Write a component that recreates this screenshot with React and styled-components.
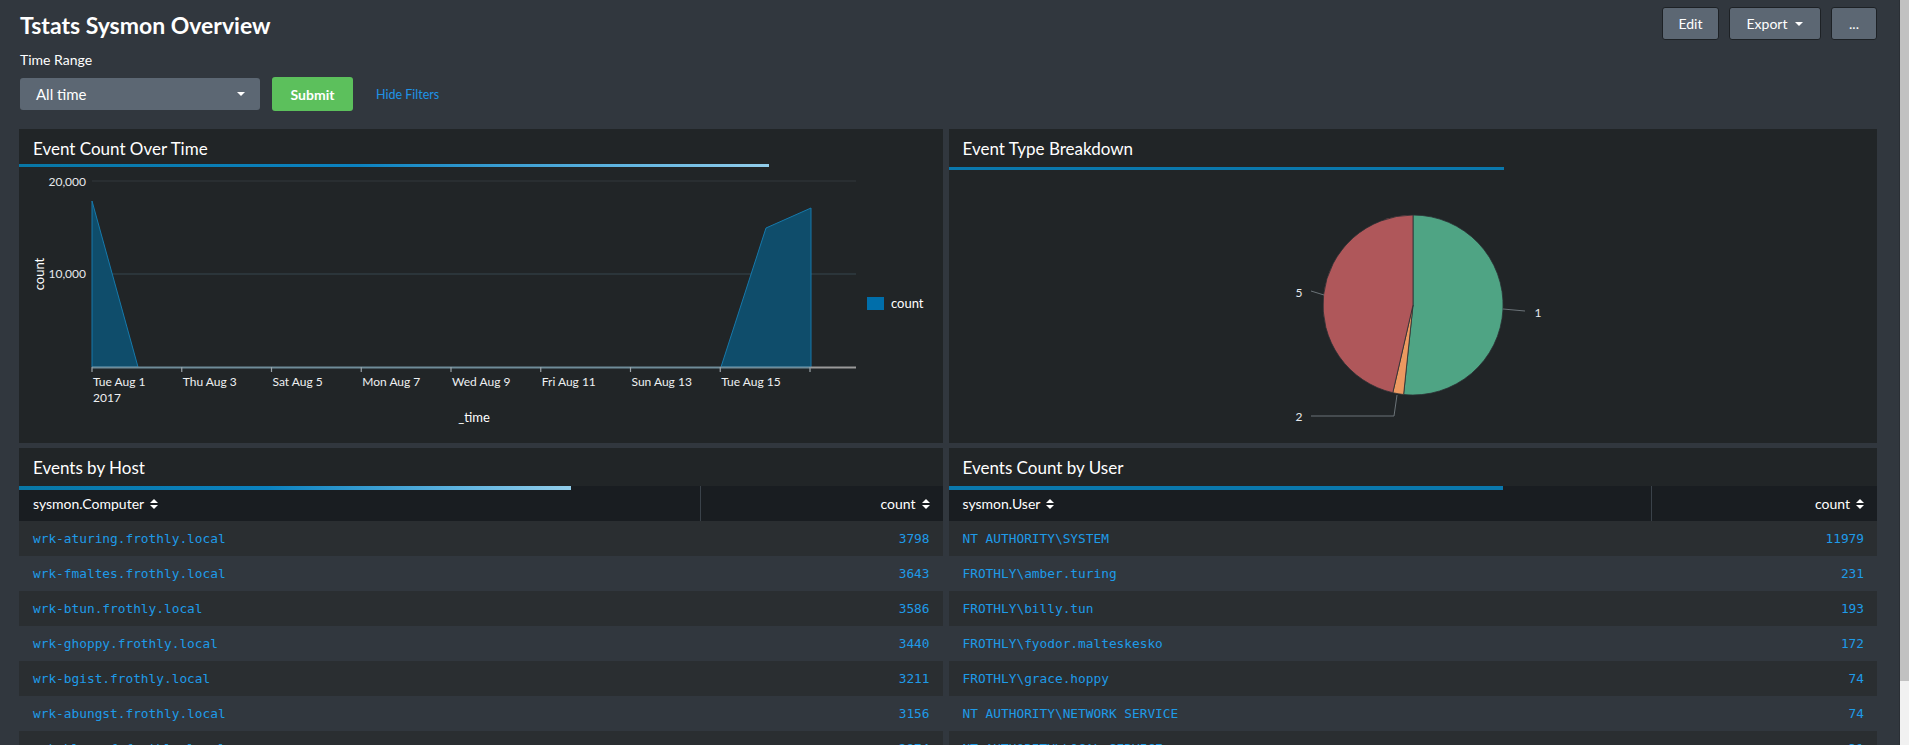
import styled, { createGlobalStyle } from "styled-components";

const GlobalStyle = createGlobalStyle`
  html, body {
    margin: 0;
    padding: 0;
  }
  body {
    background: #31373e;
    font-family: Lato, "Open Sans", sans-serif;
    color: #fff;
    overflow: hidden;
  }
`;

const Shell = styled.div`
  display: flex;
  height: 100vh;
  overflow: hidden;
`;

const Page = styled.main`
  flex: 1;
  min-width: 0;
  padding: 0 22px 0 19px;
  background: #31373e;
`;

const Scrollbar = styled.div`
  width: 9px;
  background: #f1f1f1;
  border-left: 1px solid #2a2f35;
`;

const Thumb = styled.div`
  height: 681px;
  background: #c1c1c1;
`;

const Header = styled.header`
  display: flex;
  justify-content: space-between;
  align-items: flex-start;
  padding-left: 1px;
`;

const Intro = styled.div`
  padding-top: 11px;
`;

const Title = styled.h1`
  margin: 0;
  font-size: 23px;
  line-height: 29px;
  font-weight: 700;
  color: #fff;
`;

const FieldLabel = styled.div`
  margin-top: 11px;
  font-size: 14px;
  line-height: 17px;
  color: #fff;
`;

const FilterRow = styled.div`
  display: flex;
  align-items: center;
  height: 34px;
  margin-top: 9px;
`;

const Select = styled.div`
  box-sizing: border-box;
  width: 240px;
  height: 32px;
  padding: 0 15px 0 16px;
  display: flex;
  align-items: center;
  justify-content: space-between;
  background: #5c6773;
  border-radius: 3px;
  font-size: 15px;
  color: #fff;
`;

const Caret = styled.span`
  display: inline-block;
  width: 0;
  height: 0;
  margin-left: ${(p) => p.$gap || 0}px;
  border-left: 4px solid transparent;
  border-right: 4px solid transparent;
  border-top: 4px solid #fff;
`;

const SubmitButton = styled.button`
  margin-left: 12px;
  width: 81px;
  height: 34px;
  border: none;
  border-radius: 3px;
  background: #5cc05c;
  color: #fff;
  font-family: Lato, "Open Sans", sans-serif;
  font-size: 14px;
  font-weight: 700;
`;

const HideLink = styled.a`
  margin-left: 23px;
  font-size: 12.5px;
  color: #1e93e6;
  text-decoration: none;
`;

const Actions = styled.div`
  display: flex;
  gap: 10px;
  margin-top: 7px;
`;

const ActionButton = styled.button`
  box-sizing: border-box;
  width: ${(p) => p.$w}px;
  height: 33px;
  display: flex;
  align-items: center;
  justify-content: center;
  background: #5c6773;
  border: 1px solid #1d2125;
  border-radius: 3px;
  color: #fff;
  font-family: Lato, "Open Sans", sans-serif;
  font-size: 14px;
`;

const Grid = styled.div`
  display: grid;
  grid-template-columns: 924fr 929fr;
  grid-template-rows: 314px auto;
  gap: 5px 6px;
  margin-top: 18px;
`;

const Panel = styled.section`
  display: flex;
  flex-direction: column;
  min-width: 0;
  overflow: hidden;
  background: #212527;
`;

const PanelHead = styled.div`
  position: relative;
  box-sizing: border-box;
  height: 38px;
  padding: 10px 14px 0;
  font-size: 17px;
  line-height: 20px;
  color: #fff;
`;

const Progress = styled.div`
  position: absolute;
  left: 0;
  bottom: -${(p) => p.$h}px;
  z-index: 2;
  width: ${(p) => p.$width}px;
  height: ${(p) => p.$h}px;
  background: ${(p) =>
    p.$fade
      ? "linear-gradient(90deg, #0877a6 0%, #0b82c0 45%, #5fb4e0 80%, #92cdea 100%)"
      : "#0a78ad"};
`;

const ChartBody = styled.div`
  flex: 1;
  position: relative;
`;

const PieBody = styled.div`
  flex: 1;
  display: flex;
  align-items: center;
  justify-content: center;
`;

const Table = styled.table`
  width: 100%;
  border-collapse: collapse;
  table-layout: fixed;

  tbody tr:nth-child(odd) td {
    background: #2a2e31;
  }
  tbody tr:nth-child(even) td {
    background: #31373e;
  }
`;

const Col = styled.col`
  width: ${(p) => (p.$width ? `${p.$width}px` : "auto")};
`;

const HeadCell = styled.th`
  height: 35px;
  padding: 0 13px 0 14px;
  background: #191d21;
  font-weight: 400;
  font-size: 14px;
  color: #fff;
  text-align: ${(p) => p.$align || "left"};
  border-left: ${(p) => (p.$divider ? "1px solid #3a424a" : "none")};
`;

const HeadLabel = styled.span`
  display: inline-flex;
  align-items: center;
  gap: 6px;
`;

const Cell = styled.td`
  height: 35px;
  padding: 0 13px 0 14px;
  font-family: "DejaVu Sans Mono", "Liberation Mono", monospace;
  font-size: 12.8px;
  color: #1e9be8;
  text-align: ${(p) => p.$align || "left"};
  white-space: nowrap;
`;

const axisText = {
  fontFamily: "Lato, 'Open Sans', sans-serif",
};

function SortIcon() {
  return (
    <svg width="8" height="10" viewBox="0 0 8 10">
      <path d="M0 4 L4 0 L8 4 Z" fill="#fff" />
      <path d="M0 6 L8 6 L4 10 Z" fill="#fff" />
    </svg>
  );
}

const ticks = [
  ["Tue Aug 1", "2017"],
  ["Thu Aug 3"],
  ["Sat Aug 5"],
  ["Mon Aug 7"],
  ["Wed Aug 9"],
  ["Fri Aug 11"],
  ["Sun Aug 13"],
  ["Tue Aug 15"],
  [],
];

function AreaChart() {
  const x0 = 73;
  const step = 89.75;
  return (
    <svg width="924" height="276" viewBox="0 0 924 276" style={axisText}>
      <line x1="73" y1="17" x2="837" y2="17" stroke="#32383d" strokeWidth="1.2" />
      <line x1="73" y1="110" x2="837" y2="110" stroke="#37474f" strokeWidth="1" />
      <text x="67" y="22" fill="#e6e9ec" fontSize="12" textAnchor="end">20,000</text>
      <text x="67" y="114" fill="#e6e9ec" fontSize="12" textAnchor="end">10,000</text>
      <text
        x="0"
        y="0"
        fill="#fff"
        fontSize="13"
        textAnchor="middle"
        transform="translate(25 110) rotate(-90)"
      >
        count
      </text>

      <path d="M73 37 L119 203 L73 203 Z" fill="#0f4d6b" stroke="#1679ab" strokeWidth="1" />
      <path
        d="M702 203 L747 64 L792 44 L792 203 Z"
        fill="#0f4d6b"
        stroke="#1679ab"
        strokeWidth="1"
      />

      <line x1="73" y1="203.5" x2="792" y2="203.5" stroke="#6f8c99" strokeWidth="2" />
      <line x1="792" y1="203.5" x2="837" y2="203.5" stroke="#9a9a9a" strokeWidth="2" />

      {ticks.map((t, i) => {
        const x = x0 + i * step;
        return (
          <g key={i}>
            <line x1={x} y1="203" x2={x} y2="208" stroke="#9aa3a8" strokeWidth="1.2" />
            {t[0] && (
              <text x={x + 1} y="222" fill="#eef0f2" fontSize="12">
                {t[0]}
              </text>
            )}
            {t[1] && (
              <text x={x + 1} y="238" fill="#eef0f2" fontSize="12">
                {t[1]}
              </text>
            )}
          </g>
        );
      })}

      <text x="455" y="258" fill="#fff" fontSize="13" textAnchor="middle">_time</text>

      <rect x="848" y="133" width="17" height="13" fill="#006eaa" />
      <text x="872" y="144" fill="#fff" fontSize="13">count</text>
    </svg>
  );
}

function PieChart() {
  return (
    <svg width="300" height="276" viewBox="0 0 300 276" style={axisText}>
      <path
        d="M150 138 L150 48 A90 90 0 1 1 140.6 227.5 Z"
        fill="#4fa484"
        stroke="#2b3034"
        strokeWidth="0.8"
      />
      <path
        d="M150 138 L140.6 227.5 A90 90 0 0 1 129.8 225.7 Z"
        fill="#ec9960"
        stroke="#2b3034"
        strokeWidth="0.8"
      />
      <path
        d="M150 138 L129.8 225.7 A90 90 0 0 1 150 48 Z"
        fill="#af575a"
        stroke="#2b3034"
        strokeWidth="0.8"
      />

      <polyline points="48,124 61,128" fill="none" stroke="#6b7378" strokeWidth="1" />
      <polyline points="48,249 131,249 134,228" fill="none" stroke="#6b7378" strokeWidth="1" />
      <polyline points="240,142 262,144" fill="none" stroke="#6b7378" strokeWidth="1" />

      <text x="36" y="130" fill="#e6e9ec" fontSize="12" textAnchor="middle">5</text>
      <text x="36" y="254" fill="#e6e9ec" fontSize="12" textAnchor="middle">2</text>
      <text x="275" y="150" fill="#e6e9ec" fontSize="12" textAnchor="middle">1</text>
    </svg>
  );
}

const hosts = [
  ["wrk-aturing.frothly.local", 3798],
  ["wrk-fmaltes.frothly.local", 3643],
  ["wrk-btun.frothly.local", 3586],
  ["wrk-ghoppy.frothly.local", 3440],
  ["wrk-bgist.frothly.local", 3211],
  ["wrk-abungst.frothly.local", 3156],
  ["wrk-klagerf.frothly.local", 2874],
];

const users = [
  ["NT AUTHORITY\\SYSTEM", 11979],
  ["FROTHLY\\amber.turing", 231],
  ["FROTHLY\\billy.tun", 193],
  ["FROTHLY\\fyodor.malteskesko", 172],
  ["FROTHLY\\grace.hoppy", 74],
  ["NT AUTHORITY\\NETWORK SERVICE", 74],
  ["NT AUTHORITY\\LOCAL SERVICE", 31],
];

function CountTable({ field, rows, split }) {
  return (
    <Table>
      <colgroup>
        <Col $width={split} />
        <Col />
      </colgroup>
      <thead>
        <tr>
          <HeadCell>
            <HeadLabel>
              {field}
              <SortIcon />
            </HeadLabel>
          </HeadCell>
          <HeadCell $align="right" $divider>
            <HeadLabel>
              count
              <SortIcon />
            </HeadLabel>
          </HeadCell>
        </tr>
      </thead>
      <tbody>
        {rows.map(([name, count]) => (
          <tr key={name}>
            <Cell>{name}</Cell>
            <Cell $align="right">{count}</Cell>
          </tr>
        ))}
      </tbody>
    </Table>
  );
}

export default function App() {
  return (
    <>
      <GlobalStyle />
      <Shell>
        <Page>
          <Header>
            <Intro>
              <Title>Tstats Sysmon Overview</Title>
              <FieldLabel>Time Range</FieldLabel>
              <FilterRow>
                <Select>
                  All time
                  <Caret />
                </Select>
                <SubmitButton>Submit</SubmitButton>
                <HideLink href="#">Hide Filters</HideLink>
              </FilterRow>
            </Intro>
            <Actions>
              <ActionButton $w={57}>Edit</ActionButton>
              <ActionButton $w={92}>
                Export
                <Caret $gap={8} />
              </ActionButton>
              <ActionButton $w={46}>...</ActionButton>
            </Actions>
          </Header>

          <Grid>
            <Panel>
              <PanelHead>
                Event Count Over Time
                <Progress $width={750} $h={3} $fade />
              </PanelHead>
              <ChartBody>
                <AreaChart />
              </ChartBody>
            </Panel>

            <Panel>
              <PanelHead>
                Event Type Breakdown
                <Progress $width={555} $h={3} />
              </PanelHead>
              <PieBody>
                <PieChart />
              </PieBody>
            </Panel>

            <Panel>
              <PanelHead>
                Events by Host
                <Progress $width={552} $h={4} $fade />
              </PanelHead>
              <CountTable field="sysmon.Computer" rows={hosts} split={681} />
            </Panel>

            <Panel>
              <PanelHead>
                Events Count by User
                <Progress $width={554} $h={4} />
              </PanelHead>
              <CountTable field="sysmon.User" rows={users} split={703} />
            </Panel>
          </Grid>
        </Page>
        <Scrollbar>
          <Thumb />
        </Scrollbar>
      </Shell>
    </>
  );
}
